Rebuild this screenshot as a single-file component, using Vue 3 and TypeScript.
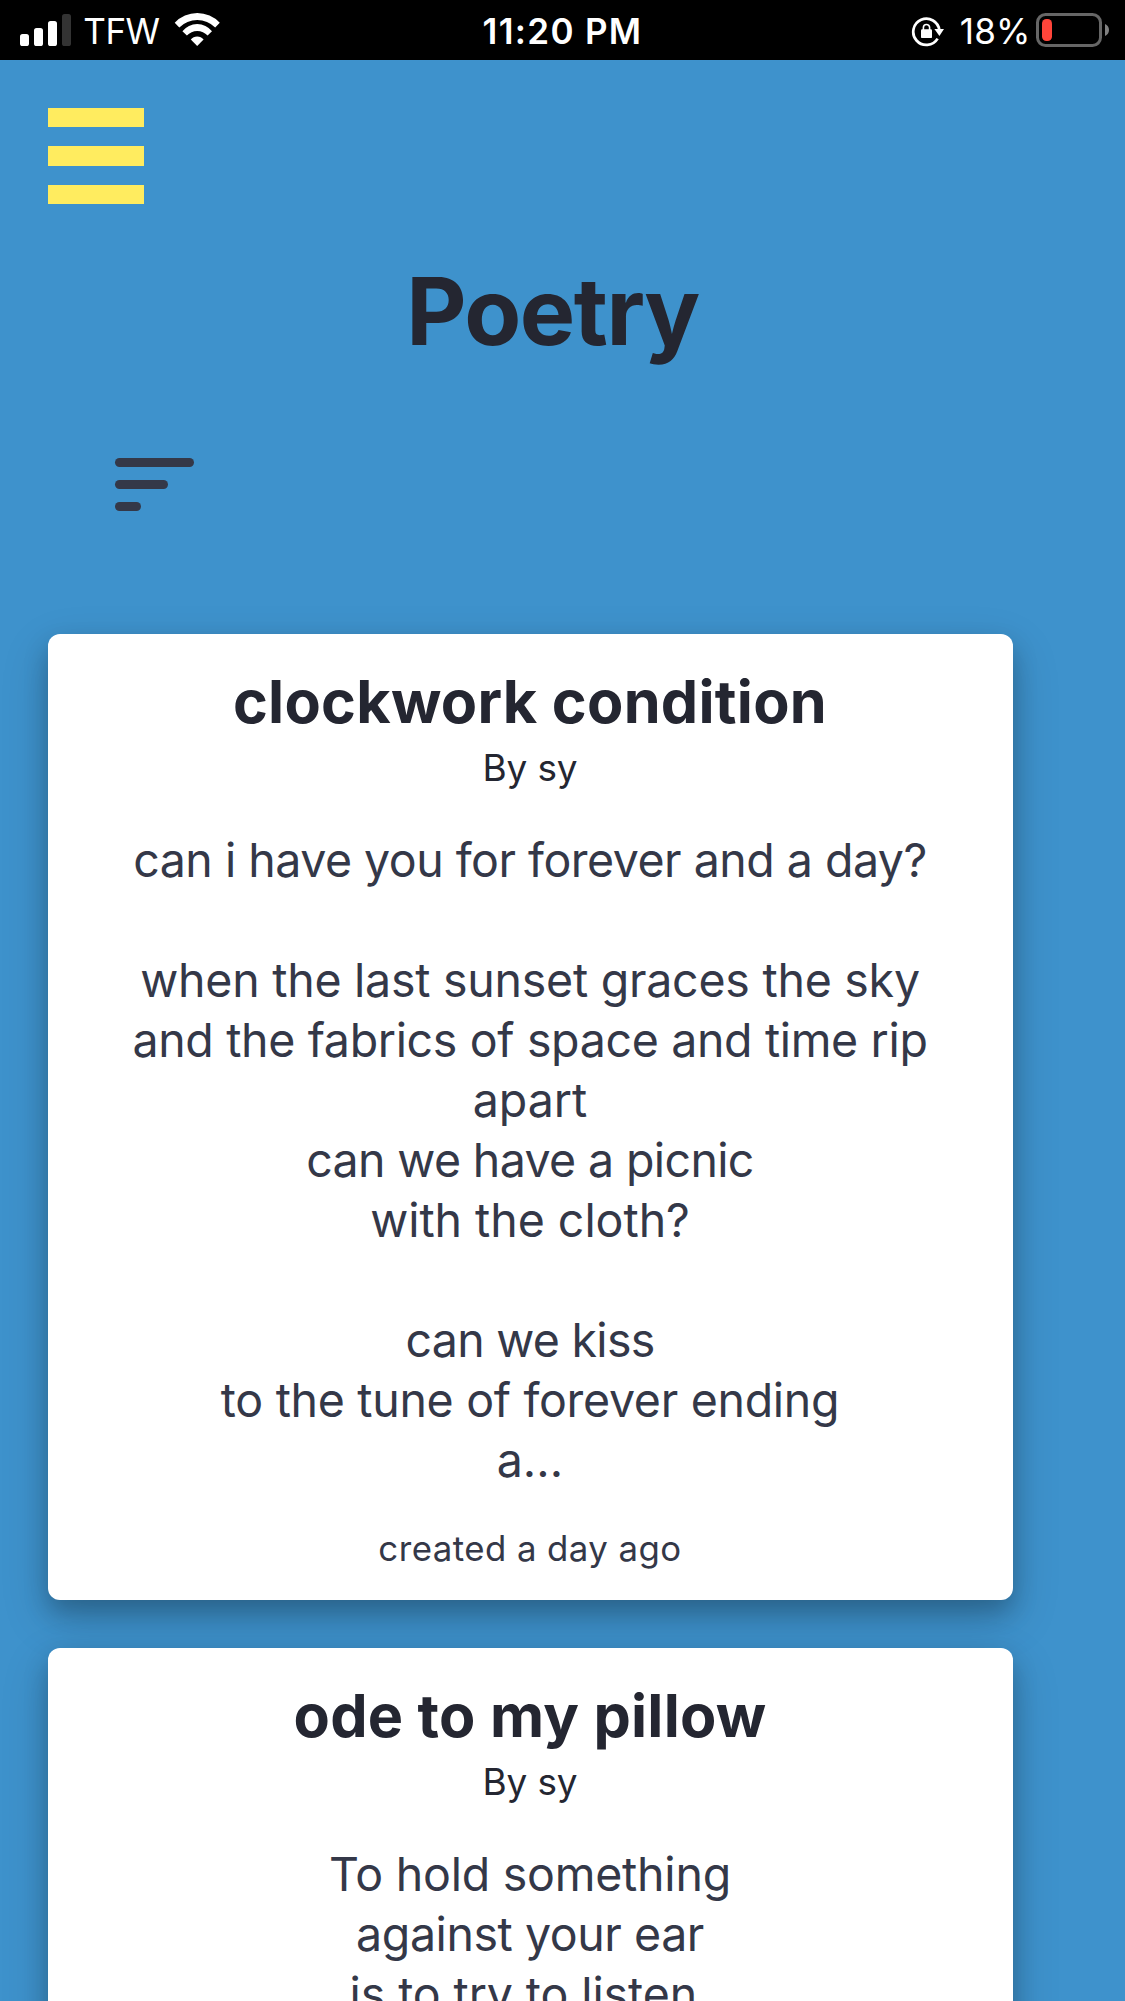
<script setup lang="ts">
interface Line {
  text: string
  spacing: number
}

interface Poem {
  title: string
  titleSpacing: number
  author: string
  lines: Line[]
  created: string
}

const line = (text = '', spacing = 0): Line => ({ text, spacing })

const poems: Poem[] = [
  {
    title: 'clockwork condition',
    titleSpacing: 0.28,
    author: 'sy',
    lines: [
      line('can i have you for forever and a day?', -0.5),
      line(),
      line('when the last sunset graces the sky', -0.25),
      line('and the fabrics of space and time rip', -0.342),
      line('apart', -0.02),
      line('can we have a picnic', -0.63),
      line('with the cloth?', -0.03),
      line(),
      line('can we kiss', -0.711),
      line('to the tune of forever ending', -0.3),
      line('a...', 0.1),
    ],
    created: 'created a day ago',
  },
  {
    title: 'ode to my pillow',
    titleSpacing: 0.24,
    author: 'sy',
    lines: [
      line('To hold something', -0.23),
      line('against your ear', -0.431),
      line('is to try to listen.', -0.1),
    ],
    created: 'created a day ago',
  },
]
</script>

<template>
  <div class="screen">
    <header class="status">
      <div class="status-left">
        <svg class="signal" width="51" height="60" viewBox="20 0 51 60">
          <rect x="20" y="34" width="9" height="12" rx="2.6" fill="#fff" />
          <rect x="34" y="28" width="9" height="18" rx="2.6" fill="#fff" />
          <rect x="48" y="21" width="9" height="25" rx="2.6" fill="#fff" />
          <rect x="62" y="14" width="9" height="32" rx="2.6" fill="#333" />
        </svg>
        <span class="carrier">TFW</span>
        <svg width="47" height="60" viewBox="174 0 47 60" fill="#fff">
          <path d="M174.7 22.7A31 31 0 0 1 219.8 22.7L215.2 27.4A25.4 25.4 0 0 0 179.3 27.4Z" />
          <path d="M182.4 31.2A18.9 18.9 0 0 1 212 31.2L207.6 35.6A13.9 13.9 0 0 0 186.9 35.6Z" />
          <path d="M190.8 39.6A8.2 8.2 0 0 1 203.6 39.6L197.2 46Z" />
        </svg>
      </div>
      <div class="clock">11:20 PM</div>
      <div class="status-right">
        <svg width="34" height="60" viewBox="911 0 34 60">
          <path d="M937.6 38.6A13.1 13.1 0 1 1 939.4 30.5" fill="none" stroke="#fff" stroke-width="2.7" />
          <path d="M934.4 29H944L939.4 36Z" fill="#fff" />
          <rect x="921" y="29.3" width="11" height="8.8" rx="1.2" fill="#fff" />
          <path d="M923.4 30V27.6a3.1 3.1 0 0 1 6.2 0V30" fill="none" stroke="#fff" stroke-width="1.6" />
        </svg>
        <span class="percent">18%</span>
        <svg width="74" height="60" viewBox="1036 0 74 60">
          <rect x="1037.5" y="14.5" width="63" height="31" rx="8" fill="none" stroke="#666" stroke-width="3" />
          <rect x="1042" y="19" width="10" height="22" rx="4.4" fill="#ff453a" />
          <path d="M1105 24C1107.4 25 1109 27.2 1109 30S1107.4 35 1105 36Z" fill="#808080" />
        </svg>
      </div>
    </header>

    <main class="page">
      <div class="menu"><i /><i /><i /></div>
      <h1>Poetry</h1>
      <div class="sort"><i class="long" /><i class="medium" /><i class="short" /></div>

      <section class="cards">
        <article v-for="poem in poems" :key="poem.title" class="card">
          <h2 :style="{ letterSpacing: poem.titleSpacing + 'px' }">{{ poem.title }}</h2>
          <div class="author">By {{ poem.author }}</div>
          <div class="body">
            <div
              v-for="(l, i) in poem.lines"
              :key="i"
              class="line"
              :style="{ letterSpacing: l.spacing + 'px' }"
            >{{ l.text }}</div>
          </div>
          <div class="created">{{ poem.created }}</div>
        </article>
      </section>
    </main>
  </div>
</template>

<style>
body {
  margin: 0;
  overflow: hidden;
}
</style>

<style scoped>
.screen {
  width: 1125px;
  height: 2001px;
  overflow: hidden;
  background: #3e92cc;
  font-family: Inter, 'Liberation Sans', sans-serif;
  color: #343848;
}

.status {
  display: grid;
  grid-template-columns: 1fr auto 1fr;
  height: 60px;
  background: #000;
  color: #fff;
  font-size: 35px;
  line-height: 62px;
  white-space: nowrap;
}

.status svg {
  display: block;
  flex: none;
}

.status-left {
  display: flex;
  padding-left: 20px;
}

.carrier {
  margin: 0 14.5px 0 12.3px;
  letter-spacing: -0.5px;
}

.clock {
  font-weight: 600;
  letter-spacing: 1.322px;
}

.status-right {
  display: flex;
  justify-content: flex-end;
  padding-right: 15px;
}

.percent {
  margin: 0 5.4px 0 14.7px;
  letter-spacing: 0.206px;
}

.page {
  padding: 48px 48px 0;
}

.menu {
  display: flex;
  flex-direction: column;
  gap: 19px;
  width: 96px;
}

.menu i {
  height: 19px;
  background: #ffec5f;
}

.menu i:nth-child(2) {
  height: 20px;
}

h1 {
  width: 1009px;
  margin: 51px 0 0;
  font-size: 93.1px;
  font-weight: 700;
  line-height: 112px;
  letter-spacing: -1.5px;
  text-align: center;
  color: #242631;
}

.sort {
  display: flex;
  flex-direction: column;
  gap: 13px;
  margin: 91px 0 0 67px;
}

.sort i {
  height: 9px;
  border-radius: 4.5px;
  background: #343848;
}

.long {
  width: 79px;
}

.medium {
  width: 53px;
}

.short {
  width: 26.4px;
}

.cards {
  display: flex;
  flex-direction: column;
  gap: 48px;
  width: 965px;
  margin-top: 123px;
}

.card {
  box-sizing: border-box;
  padding: 32px 1px 30px 0;
  border-radius: 12px;
  background: #fff;
  box-shadow: 0 12px 24px rgba(0, 0, 0, 0.21), 0 18px 48px rgba(0, 0, 0, 0.17);
  text-align: center;
  white-space: nowrap;
}

h2 {
  margin: 0;
  font-size: 59.3px;
  font-weight: 700;
  line-height: 72px;
  color: #242631;
}

.author {
  margin-top: 7px;
  font-size: 37px;
  line-height: 46px;
  letter-spacing: -0.135px;
  color: #242631;
}

.body {
  margin-top: 39px;
  font-size: 46.5px;
}

.line {
  height: 60px;
  line-height: 60px;
}

.created {
  margin-top: 36px;
  font-size: 34.8px;
  line-height: 44px;
  letter-spacing: 0.445px;
}
</style>
